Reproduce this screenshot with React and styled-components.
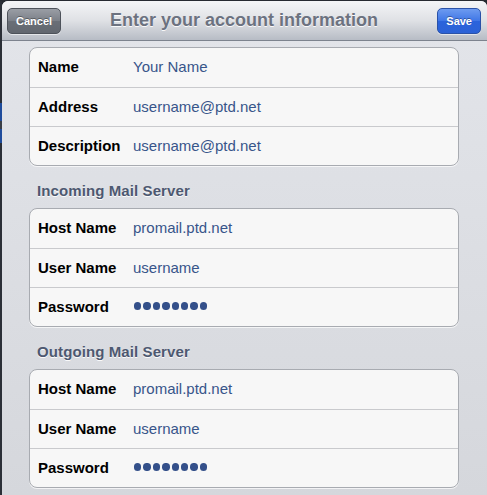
import React from "react";
import styled, { createGlobalStyle } from "styled-components";

const sections = [
  {
    title: null,
    rows: [
      { label: "Name", value: "Your Name" },
      { label: "Address", value: "username@ptd.net" },
      { label: "Description", value: "username@ptd.net" },
    ],
  },
  {
    title: "Incoming Mail Server",
    rows: [
      { label: "Host Name", value: "promail.ptd.net" },
      { label: "User Name", value: "username" },
      { label: "Password", secret: 8 },
    ],
  },
  {
    title: "Outgoing Mail Server",
    rows: [
      { label: "Host Name", value: "promail.ptd.net" },
      { label: "User Name", value: "username" },
      { label: "Password", secret: 8 },
    ],
  },
];

export default function App() {
  return (
    <>
      <GlobalStyle />
      <Frame>
        <Edge />
        <Sheet>
          <NavBar>
            <NavButton>Cancel</NavButton>
            <Title>Enter your account information</Title>
            <NavButton primary>Save</NavButton>
          </NavBar>

          <Content>
            {sections.map((section, i) => (
              <div key={i}>
                {section.title && <SectionHeader>{section.title}</SectionHeader>}
                <Group>
                  {section.rows.map((row) => (
                    <Row key={row.label}>
                      <Label>{row.label}</Label>
                      {row.secret ? (
                        <Dots aria-label="password">
                          {Array.from({ length: row.secret }).map((_, d) => (
                            <Dot key={d} />
                          ))}
                        </Dots>
                      ) : (
                        <Value>{row.value}</Value>
                      )}
                    </Row>
                  ))}
                </Group>
              </div>
            ))}
          </Content>
        </Sheet>
      </Frame>
    </>
  );
}

/* ==============>styled-components <============= */
const GlobalStyle = createGlobalStyle`
  html, body {
    margin: 0;
    padding: 0;
    background: #262a31;
  }
  body {
    font-family: "Liberation Sans", Arial, Helvetica, sans-serif;
  }
`;

const Frame = styled.div`
  display: flex;
  width: 487px;
  height: 495px;
  padding-top: 1px;
  box-sizing: border-box;
  overflow: hidden;
`;

const Edge = styled.div`
  width: 2px;
  flex-shrink: 0;
  background: linear-gradient(
    to bottom,
    #2b2f37 0px,
    #2b2f37 102px,
    #1f4c9c 102px,
    #1f4c9c 120px,
    #3a3f48 120px,
    #3a3f48 128px,
    #1f4c9c 128px,
    #1f4c9c 142px,
    #2b2f37 142px
  );
`;

const Sheet = styled.div`
  flex: 1;
  display: flex;
  flex-direction: column;
  border-radius: 6px 6px 0 0;
  overflow: hidden;
  background: linear-gradient(to bottom, #e3e5ea 0%, #d5d7dc 100%);
`;

const NavBar = styled.div`
  height: 39px;
  flex-shrink: 0;
  display: grid;
  grid-template-columns: 1fr auto 1fr;
  align-items: center;
  padding: 0 6px 0 5px;
  background: linear-gradient(to bottom, #f4f5f7 0%, #dfe1e5 50%, #b7bcc5 100%);
  border-bottom: 1px solid #7d838e;
`;

const NavButton = styled.button`
  justify-self: ${(p) => (p.primary ? "end" : "start")};
  height: 26px;
  padding: 0 8px;
  margin-top: 1px;
  border-radius: 5px;
  border: 1px solid ${(p) => (p.primary ? "#2a52a8" : "#4d525a")};
  background: ${(p) =>
    p.primary
      ? "linear-gradient(to bottom, #6d9bf0 0%, #3f76e6 50%, #2a63dc 51%, #2c62d6 100%)"
      : "linear-gradient(to bottom, #9a9ea5 0%, #7b8088 50%, #6a6f77 51%, #62676f 100%)"};
  box-shadow: 0 1px 0 rgba(255, 255, 255, 0.55);
  color: #fff;
  font-family: "Liberation Sans", Arial, sans-serif;
  font-size: 11px;
  font-weight: bold;
  text-shadow: 0 -1px 0 rgba(0, 0, 0, 0.35);
  cursor: pointer;
`;

const Title = styled.h1`
  margin: 0;
  font-size: 18px;
  font-weight: bold;
  color: #6c7280;
  text-shadow: 0 1px 0 rgba(255, 255, 255, 0.9);
`;

const Content = styled.div`
  padding: 6px 28px 0 27px;
`;

const SectionHeader = styled.div`
  padding: 16px 0 8px 8px;
  line-height: 18px;
  font-size: 15px;
  font-weight: bold;
  color: #4d5870;
  letter-spacing: 0.1px;
  text-shadow: 0 1px 0 rgba(255, 255, 255, 0.9);
`;

const Group = styled.div`
  background: #f7f7f7;
  border: 1px solid #a8abb1;
  border-radius: 8px;
  box-shadow: 0 1px 0 rgba(255, 255, 255, 0.7);
  overflow: hidden;
`;

const Row = styled.div`
  display: flex;
  align-items: center;
  box-sizing: border-box;
  height: 39px;
  padding: 0 0 2px 8px;
  & + & {
    border-top: 1px solid #c9cacd;
  }
`;

const Label = styled.span`
  width: 95px;
  flex-shrink: 0;
  font-size: 15px;
  font-weight: bold;
  color: #000;
`;

const Value = styled.span`
  font-size: 15px;
  color: #38558a;
`;

const Dots = styled.span`
  display: flex;
  gap: 2px;
  padding-left: 1px;
`;

const Dot = styled.span`
  width: 7.4px;
  height: 7.4px;
  border-radius: 50%;
  background: #34508a;
`;
